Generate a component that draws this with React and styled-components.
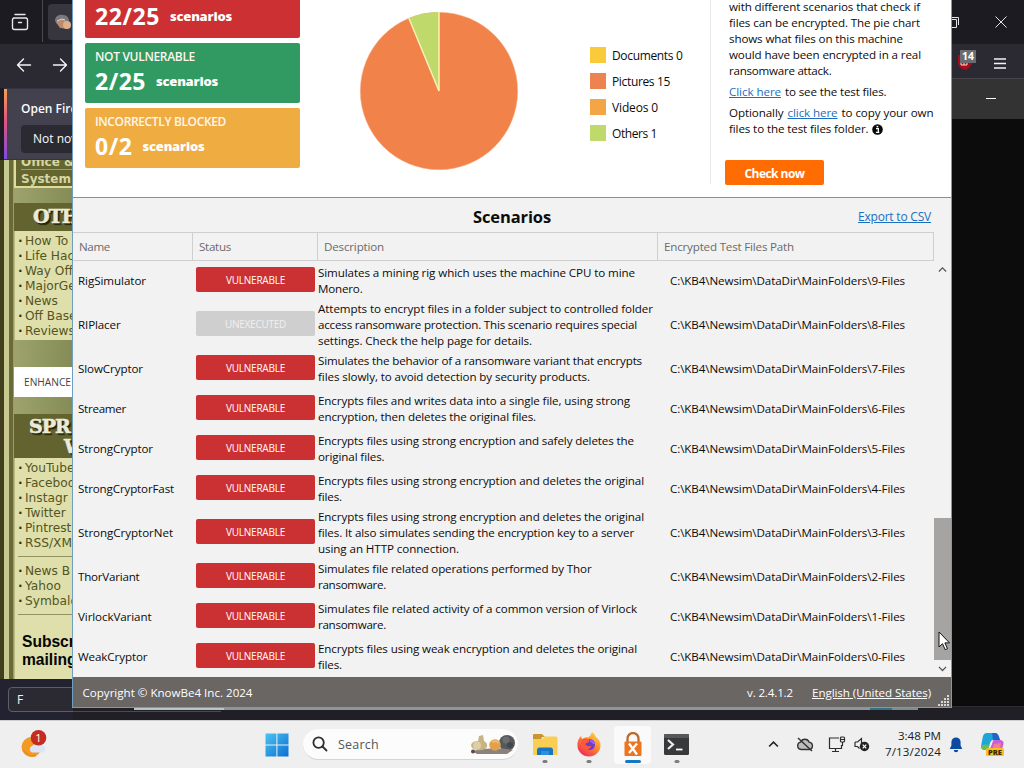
import React, { useLayoutEffect, useRef, useState } from "react";
import styled, { createGlobalStyle, css } from "styled-components";

const GlobalStyle = createGlobalStyle`
  * { box-sizing: border-box; }
  body { margin: 0; font-family: "Open Sans", "Noto Sans", sans-serif; font-size: 11.6px; color: #0c0c0c; }
  svg { display: block; flex: none; }
`;

const verdana = `"DejaVu Sans", Verdana, sans-serif`;

/* Text that tightens its tracking so that it fills a given width. */
const FitSpan = styled.span`
  display: inline-block;
  white-space: pre;
  a > & { text-decoration: underline; text-underline-offset: 1px; }
`;
function Fit({ w, children }) {
  const ref = useRef(null);
  const [spacing, setSpacing] = useState(0);
  useLayoutEffect(() => {
    const natural = ref.current.getBoundingClientRect().width;
    setSpacing((w - natural) / children.length);
  }, []);
  return <FitSpan ref={ref} style={{ letterSpacing: `${spacing}px` }}>{children}</FitSpan>;
}

const Desktop = styled.div`
  width: 1024px; height: 768px; overflow: hidden;
  display: flex; flex-direction: column;
  background: #0c0c0c;
`;
const Workspace = styled.div`
  position: relative; height: 720px; flex: none; overflow: hidden;
  display: flex; justify-content: space-between;
`;

/* ---------- browser behind the dialog ---------- */
const LeftPane = styled.div`width: 73px; overflow: hidden; display: flex; flex-direction: column; background: #1c1b22; position: relative;`;
const RightPane = styled.div`width: 84px; display: flex; flex-direction: column;`;
const TabStrip = styled.div`
  height: 44px; flex: none; background: #1c1b22; display: flex; align-items: center;
  padding-left: 11px; color: #e6e6ea;
`;
const TabDivider = styled.i`width: 1px; height: 42px; flex: none; margin: 0 5px 2px 13px; background: #4a4952;`;
const Tab = styled.div`
  height: 36px; width: 90px; flex: none; background: #37363f; border-radius: 4px 0 0 4px;
  display: flex; align-items: center; padding-left: 6px;
`;
const NavBar = styled.div`
  height: 44px; flex: none; background: #2b2a33; display: flex; align-items: flex-start;
  padding: 13px 0 0 16px; gap: 20px; color: #f4f4f6;
`;
const Notice = styled.div`
  height: 72px; flex: none; background: #42414d; margin-left: 4px; display: flex;
  border: 1px solid #35343f; border-left: 0; 
`;
const NoticeStripe = styled.i`width: 3px; flex: none; background: linear-gradient(#f5a055, #e0557f 45%, #7d4be0);`;
const NoticeBody = styled.div`
  padding: 12px 0 0 14px; color: #fbfbfe; font-size: 12px; line-height: 16px; font-weight: 600; white-space: nowrap;
`;
const NoticeButton = styled.div`
  margin-top: 8px; width: 100px; height: 28px; border-radius: 4px; background: #2b2a33;
  padding: 6px 12px; font-weight: 500;
`;
const Page = styled.div`
  height: 519px; flex: none; display: flex; overflow: hidden;
  background: linear-gradient(90deg, #413e1e 0 4px, #c7ca90 4px 9px, #6a6a38 9px 13px, #9a9e68 13px);
`;
const Sidebar = styled.div`
  margin-left: 14px; width: 120px; flex: none; display: flex; flex-direction: column; font-family: ${verdana};
  background: linear-gradient(90deg, #9da36b, #858b56 60px);
`;
const OpenLinks = styled.div`
  height: 28px; flex: none; background: #64652f; border: 2px solid #dfdb98; border-top: 0; color: #d6d5a4;
  font-weight: 700; font-size: 12px; line-height: 14px; padding-left: 5px; overflow: hidden; white-space: nowrap;
`;
const OpenLink = styled.div`
  height: 16px; line-height: 18px; border-top: 1px solid #a09e5b;
  &:first-child { height: 9px; border: 0; line-height: 4px; }
`;
const SideHead = styled.div`
  margin-top: ${(p) => p.$gap}px; height: ${(p) => p.$h}px; flex: none; background: #62632f;
  font-family: "DejaVu Serif", "Liberation Serif", serif; font-weight: 700; font-size: 19px; line-height: 20px;
  letter-spacing: -1px; -webkit-text-stroke: 0.6px #ecebd8;
  color: #ecebd8; text-shadow: 1px 1px 0 #23230c, 2px 2px 1px #23230c;
  padding: ${(p) => p.$pad}; white-space: nowrap; overflow: hidden;
`;
const Indent = styled.span`padding-left: 35px;`;
const SideList = styled.div`
  flex: none; background: #dedfab; border-left: 1px solid #b8ba80; padding: 2px 0 2px 3px; white-space: nowrap;
  font-size: 12.2px; line-height: 15px; color: #55551f;
  ${(p) => p.$grow && css`flex: 1;`}
`;
const SideItem = styled.div`
  position: relative; top: 0.5px;
  &::before { content: "·"; font-weight: 700; display: inline-block; width: 7px; color: #33330f; }
`;
const SideRule = styled.div`height: 1px; background: #8f9160; margin: 6px 0 6px; width: 100px;`;
const Mailing = styled.div`
  font: 700 15.6px/18px "Liberation Sans", Arial, sans-serif; color: #050505; padding: 12px 0 0 4px;
`;
const AdLabel = styled.div`
  margin-top: 27px; height: 30px; flex: none; background: #fff; color: #444; margin-bottom: 0;
  font: 10.2px/31px "Open Sans", sans-serif; padding-left: 10px;
`;
const FindBar = styled.div`flex: 1; background: #232230; padding: 8px 0 0 8px;`;
const FindInput = styled.div`
  width: 240px; height: 25px; border: 1px solid #5e5d6b; border-radius: 4px; background: #2b2a33;
  color: #f4f4f6; font-size: 12px; line-height: 24px; padding-left: 8px;
`;

const CaptionBar = styled(TabStrip)`padding: 0 17px 0 8px; justify-content: space-between;`;
const ExtBar = styled(NavBar)`height: 34px; padding: 5px 18px 0 18px; justify-content: space-between; gap: 0;`;
const MenuIcon = styled.div`padding-top: 9px;`;
const Blocker = styled.div`position: relative; width: 20px; height: 24px;`;
const BlockerCount = styled.span`
  position: absolute; left: 2px; top: 1px; width: 16px; height: 13px; background: #6b6b70; color: #fff;
  font: 700 10.5px/13px "Open Sans", sans-serif; text-align: center;
`;
const TerminalBar = styled.div`
  height: 41px; flex: none; background: #333; border-top: 1px solid #45454a; display: flex; align-items: center;
  justify-content: flex-end; padding: 0 28px 1px 0;
`;
const Dash = styled.i`width: 10px; height: 1px; background: #fff;`;
const BottomStrip = styled.div`
  position: absolute; left: 0; right: 0; bottom: 0; height: 14px; background: #201f26; border-top: 1px solid #2a2a30;
`;
const Glimpse = styled.i`
  position: absolute; top: ${(p) => p.$y || 708}px; left: ${(p) => p.$x}px; width: ${(p) => p.$w}px;
  height: ${(p) => p.$h || 2}px; background: ${(p) => p.$c};
`;

/* ---------- simulator dialog ---------- */
const Dialog = styled.div`
  position: absolute; left: 72px; top: 0; width: 880px; height: 708px; overflow: hidden;
  background: #f2f2f2; border: solid #6f9fc0; border-width: 0 1px 1px; display: flex; flex-direction: column;
`;
const Summary = styled.div`
  height: 198px; flex: none; background: #fff; border-bottom: 1px solid #8b8d90; display: flex; overflow: hidden;
`;
const Cards = styled.div`width: 215px; margin: -22.5px 0 0 12px; display: flex; flex-direction: column; gap: 5px; flex: none;`;
const Card = styled.div`
  height: 60px; flex: none; border-radius: 2px; background: ${(p) => p.$bg}; color: #fff; padding: 5.5px 10px;
`;
const CardLabel = styled.div`height: 17px; line-height: 17px; font-size: 12px; font-weight: 600; color: #fdf6ee;`;
const CardValue = styled.div`display: flex; align-items: center; gap: 10px; height: 32px;`;
const Count = styled.span`font-size: 23px; font-weight: 700; line-height: 32px;`;
const CountUnit = styled.span`font-size: 13px; font-weight: 800; line-height: 20px; margin-top: -1px;`;
const PieBox = styled.div`margin: 11px 0 0 58.5px; width: 160px; flex: none;`;
const Legend = styled.div`margin: 47px 0 0 71.5px; width: 120px; display: flex; flex-direction: column; gap: 10px; flex: none;`;
const LegendRow = styled.div`display: flex; align-items: center; gap: 6px; height: 16px; font-size: 12px;`;
const Swatch = styled.i`width: 16px; height: 16px; background: ${(p) => p.$c};`;
const Info = styled.div`
  height: 184px; border-left: 1px solid #e9e9e9; flex: 1; padding-left: 18px; line-height: 16px;
  display: flex; flex-direction: column; align-items: flex-start;
`;
const Para = styled.div`
  margin: 0 0 5px; white-space: nowrap; height: ${(p) => p.$lines * 16}px; flex: none;
  &:first-child { height: 79px; margin-top: -1px; margin-bottom: 6px; }
`;
const Line = styled.span`display: flex; gap: ${(p) => p.$gap || 4}px; height: 16px; align-items: center;`;
const Link = styled.a`color: #1a6fc0;`;
const CheckButton = styled.button`
  margin: 18px 0 0 -4px; width: 99px; height: 25px; border: 0; border-radius: 2px; background: #ff6c02; color: #fff;
  font: 700 12px/25px "Open Sans", sans-serif; padding: 1px 0 0;
`;
const TitleRow = styled.div`
  height: 34px; flex: none; display: grid; grid-template-columns: 1fr auto 1fr; align-items: center; padding: 3px 20px 0 20px;
`;
const Title = styled.h2`margin: 0; grid-column: 2; font-size: 16.5px; font-weight: 700; line-height: 24px;`;
const ExportLink = styled(Link)`justify-self: end; font-size: 12px; margin-top: -1px;`;
const columns = css`display: grid; grid-template-columns: 120px 125px 340px 276px;`;
const HeadRow = styled.div`${columns} height: 29px; flex: none; width: 861px; border: 1px solid #cfcfcf; border-left: 0; color: #6b6b6b;`;
const HeadCell = styled.div`border-right: 1px solid #cfcfcf; padding-left: 6px; line-height: 28px; &:last-child { border-right: 0; }`;
const TableArea = styled.div`height: 416px; flex: none; display: flex; justify-content: space-between;`;
const Rows = styled.div`width: 861px; flex: none;`;
const Row = styled.div`${columns} height: ${(p) => p.$h}px; align-items: center;`;
const NameCell = styled.div`padding-left: 5px; line-height: 16px;`;
const DescCell = styled.div`line-height: 16px;`;
const DescLine = styled.div`height: 16px;`;
const PathCell = styled.div`padding-left: 12px; line-height: 16px;`;
const StatusBadge = styled.div`
  margin: -3px 0 0 3px; width: 119px; height: 25px; border-radius: 2px; text-align: center; line-height: 26px; font-size: 10px;
  font-weight: 500; background: ${(p) => (p.$off ? "#cfcfcf" : "#cb3032")}; color: ${(p) => (p.$off ? "#f0f0f0" : "#fff")};
`;
const ScrollBar = styled.div`
  width: 17px; display: flex; flex-direction: column; align-items: center; padding-top: 6px;
`;
const Thumb = styled.i`width: 17px; height: 142px; margin: 246px 0 6px; background: #a5a4a3; flex: none;`;
const Footer = styled.div`
  position: relative; flex: 1; background: #696663; color: #fff; display: flex; align-items: center; padding: 1px 20px 0 9.5px; 
  line-height: 16px;
`;
const Version = styled.span`margin-left: auto; margin-right: 19px;`;
const FooterLink = styled.a`color: #fff;`;
const Grip = styled.div`position: absolute; right: 0; bottom: 0;`;
const Pointer = styled.div`position: absolute; left: 938px; top: 631px;`;

/* ---------- taskbar ---------- */
const TaskBar = styled.div`
  height: 48px; flex: none; background: #efeff0; border-top: 1px solid #cfcfd0; display: flex; align-items: center;
`;
const Slot = styled.div`
  width: ${(p) => p.$w}px; height: 38px; margin-left: ${(p) => p.$ml || 0}px; flex: none; position: relative;
  display: flex; align-items: center; justify-content: center; border-radius: 4px;
  ${(p) => p.$active && css`background: #fafafa;`}
  ${(p) => p.$mark && css`&::after {
    content: ""; position: absolute; bottom: 1px; left: 50%; transform: translateX(-50%); border-radius: 2px;
    width: ${p.$active ? 16 : 5}px; height: 3px; background: ${p.$active ? "#1778c2" : "#7d7d7d"};
  }`}
`;
const SearchPill = styled.div`
  margin-left: 8.5px; width: 215px; height: 31px; border-radius: 16px; background: #fcfcfc; border-bottom: 1px solid #d4d4d4; flex: none;
  display: flex; align-items: center; padding: 0 1px 0 9px; color: #555; font-size: 12.5px; gap: 10px;
`;
const SearchArt = styled.div`margin-left: auto;`;
const Clock = styled.div`width: 65px; margin: 0 1px 2px 5px; text-align: right; line-height: 16px; color: #202020; flex: none;`;

const ArchiveIcon = () => (
  <svg width="18" height="18" viewBox="0 0 18 18" fill="none" stroke="currentColor" strokeWidth="1.4" strokeLinecap="round">
    <path d="M4 1.500h10M2.500 5h13M4.500 5h-1a2 2 0 0 0-2 2v7.500a2 2 0 0 0 2 2h11a2 2 0 0 0 2-2V7a2 2 0 0 0-2-2M7.500 9.500h3" />
  </svg>
);
const FaceIcon = () => (
  <svg width="18" height="18" viewBox="0 0 18 18">
    <path d="M1 8c0-5 4-7 8-6 4 0 6 3 6 6l-4 4-8-1z" fill="#77797b" />
    <path d="M2 9l6-3 7 3-1 7-8-1z" fill="#b98a6d" />
    <circle cx="13" cy="12" r="4" fill="#dfae8c" />
    <path d="M3 8l5-2 3 1" stroke="#d8d8d6" fill="none" />
  </svg>
);
const Arrow = ({ flip }) => (
  <svg width="16" height="16" viewBox="0 0 16 16" fill="none" stroke="currentColor" strokeWidth="1.4" strokeLinecap="round" strokeLinejoin="round">
    <path d={flip ? "M1.500 8h13M8.500 2l6 6-6 6" : "M14.500 8h-13M7.500 2l-6 6 6 6"} />
  </svg>
);
const Chevron = ({ up, size = 9, color = "#555", sw = 1.4 }) => (
  <svg width={size} height={size * 0.6} viewBox="0 0 10 6" fill="none" stroke={color} strokeWidth={sw}>
    <path d={up ? "M1 5l4-4 4 4" : "M1 1l4 4 4-4"} />
  </svg>
);
const Pie = () => (
  <svg width="160" height="160" viewBox="-80 -80 160 160">
    <circle r="78.7" fill="#f0824a" stroke="#f6b08a" strokeWidth="0.500" />
    <path d="M0 0L-30.200-73A79 79 0 0 1 0-79z" fill="#bfd96a" />
    <path d="M-30.200-73L0 0V-79" fill="none" stroke="#fbf1b4" strokeWidth="1.500" strokeLinejoin="bevel" />
  </svg>
);
const InfoDot = () => (
  <svg width="11" height="11" viewBox="0 0 11 11">
    <circle cx="5.500" cy="5.500" r="5.300" fill="#080808" />
    <path d="M4 4.600h2.300v3.400M3.900 8.400h3.400" stroke="#fff" strokeWidth="1.300" fill="none" />
    <rect x="4.600" y="1.800" width="1.700" height="1.600" fill="#fff" />
  </svg>
);
const GripDots = () => (
  <svg width="14" height="13" viewBox="0 0 14 13" fill="#d8d8d8">
    {[[9, 1], [6, 4], [9, 4], [3, 7], [6, 7], [9, 7], [0, 10], [3, 10], [6, 10], [9, 10]].map(([x, y]) => (
      <rect key={`${x}-${y}`} x={x + 1} y={y} width="2" height="2" />
    ))}
  </svg>
);
const Weather = () => (
  <svg width="26" height="30" viewBox="0 0 26 30">
    <circle cx="10.500" cy="17" r="10" fill="#f39a25" />
    <path d="M3 20a9 9 0 0 0 12 5" stroke="#e99022" strokeWidth="2" fill="none" />
    <path d="M11 22.500a3.500 3.500 0 0 1 0-6.500 5 5 0 0 1 7-1 4 4 0 0 1 4 7.500z" fill="#dbe5f5" />
    <circle cx="17.500" cy="7.800" r="7.800" fill="#c52b20" />
    <text x="17.500" y="12" textAnchor="middle" fontSize="11" fill="#fff" fontFamily="Open Sans">1</text>
  </svg>
);
const WindowsLogo = () => (
  <svg width="24" height="24" viewBox="0 0 24 24">
    <defs><linearGradient id="win" x1="0" y1="0" x2="1" y2="1"><stop stopColor="#4cc3f3" /><stop offset="1" stopColor="#0a6fd0" /></linearGradient></defs>
    <path d="M.5.5H11.400V11.400H.5zM12.400.5H23.500V11.400H12.400zM.5 12.400H11.400V23.500H.5zM12.400 12.400H23.500V23.500H12.400z" fill="url(#win)" />
  </svg>
);
const Magnifier = () => (
  <svg width="16" height="16" viewBox="0 0 16 16" fill="none" stroke="#2d2d2d" strokeWidth="1.800" strokeLinecap="round">
    <circle cx="6.600" cy="6.600" r="5.200" /><path d="M10.500 10.500l4 4" />
  </svg>
);
const Gourds = () => (
  <svg width="48" height="24" viewBox="0 0 48 24">
    <circle cx="38" cy="11" r="8" fill="#55585c" /><circle cx="37" cy="8" r="3.500" fill="#6c6f72" /><circle cx="41" cy="13" r="3" fill="#44474a" />
    <path d="M3 19q20-5 41-1l-6 4H8z" fill="#8d8279" />
    <path d="M10 4l4-1 1 6q4 2 3 6-3 4-10 3-6-1-6-5 1-4 7-4z" fill="#c6b583" />
    <circle cx="8" cy="13.500" r="4" fill="#dccfa6" />
    <circle cx="26" cy="13" r="5.800" fill="#e0a04c" /><path d="M23 10q4-2 7 1" stroke="#f0bd70" strokeWidth="2" fill="none" />
    <circle cx="4" cy="19.500" r="2" fill="#5b4a43" />
  </svg>
);
const Folder = () => (
  <svg width="26" height="24" viewBox="0 0 26 24">
    <path d="M1 2q0-1 1-1h8l3 3h-3l-1 3H1z" fill="#c8962c" />
    <path d="M1 6h9l3-2.500h11q1.500 0 1.500 1.500v17H1z" fill="#f9ce52" />
    <path d="M5 22v-5q0-2.500 2.500-2.500h11q2.500 0 2.500 2.500v5z" fill="#1976c5" />
    <path d="M9 22v-4h8v4" fill="#2b91de" />
  </svg>
);
const FirefoxLogo = () => (
  <svg width="24" height="25" viewBox="0 0 24 25">
    <defs><linearGradient id="fox" x1=".9" y1="0" x2=".2" y2="1"><stop stopColor="#ffe14a" /><stop offset=".45" stopColor="#ff8a2b" /><stop offset="1" stopColor="#ef2360" /></linearGradient></defs>
    <path d="M15 0q3 2 4 5 4.500 3 4.500 8.500a11.500 11 0 0 1-23 0Q0 8 4 4l1 3q3-2 7-2 2-2 3-5z" fill="url(#fox)" />
    <circle cx="12.500" cy="12.500" r="5.500" fill="#6c3bd1" />
    <path d="M4.500 7.500q4-2 8 0l-1 3q-3 0-3 2 2 3 6 1-2 5-6 4-6-3-4-10z" fill="#fb5a37" />
    <path d="M13 9q3 0 4 3" stroke="#a45cf0" strokeWidth="2" fill="none" />
  </svg>
);
const LockLogo = () => (
  <svg width="18" height="25" viewBox="0 0 18 25">
    <path d="M3.500 11V6.500a5.500 5.500 0 0 1 11 0V11" fill="none" stroke="#bd6a2c" strokeWidth="2.300" />
    <rect x=".5" y="9.500" width="17" height="14.500" rx="1" fill="#ee7420" />
    <path d="M5 11.500l8 11M13 11.500L5 21" stroke="#fff" strokeWidth="2.300" />
  </svg>
);
const TerminalLogo = () => (
  <svg width="25" height="21" viewBox="0 0 25 21">
    <rect width="25" height="21" rx="1.500" fill="#38393b" /><rect width="25" height="4" rx="1" fill="#55575a" />
    <path d="M4 6l5 4.500-5 4.500" stroke="#ececec" strokeWidth="2.200" fill="none" /><path d="M12 15.500h6.500" stroke="#fff" strokeWidth="1.800" />
  </svg>
);
const CloudOff = () => (
  <svg width="18" height="15" viewBox="0 0 18 15" fill="none" stroke="#333" strokeWidth="1.300">
    <path d="M5 12.500a3.700 3.700 0 0 1-.4-7.300 4.600 4.600 0 0 1 8.600 0 3.700 3.700 0 0 1 .3 7.300z" fill="#bdbdbd" /><path d="M2 1l14 13" strokeWidth="1.500" />
  </svg>
);
const Monitor = () => (
  <svg width="18" height="17" viewBox="0 0 18 17" fill="none" stroke="#2d2d2d" strokeWidth="1.200">
    <path d="M11 2H1.500v10.500h12V9M7.500 12.500v3M4 15.500h7" /><rect x="12.500" y="1" width="4" height="5" rx="1" /><path d="M12.500 3.500h4M14.500 6v4" />
  </svg>
);
const SpeakerMuted = () => (
  <svg width="16" height="15" viewBox="0 0 16 15">
    <path d="M1 5h2.500L7.500 1.500V9M1 5v4.500h2.500l2 2" fill="none" stroke="#2d2d2d" strokeWidth="1.200" />
    <circle cx="10.500" cy="9.500" r="4.700" fill="#222" /><path d="M8.700 7.700l3.600 3.600M12.300 7.700l-3.600 3.600" stroke="#fff" strokeWidth="1.200" />
  </svg>
);
const Bell = () => (
  <svg width="14" height="16" viewBox="0 0 14 16" fill="#0b4a9e">
    <path d="M7 .5a4.600 4.600 0 0 0-4.600 4.600v3.400L.7 12h12.600l-1.700-3.500V5.100A4.600 4.600 0 0 0 7 .5zM4.800 13h4.400a2.200 2.200 0 0 1-4.400 0z" />
  </svg>
);
const Copilot = () => (
  <svg width="26" height="26" viewBox="0 0 26 26">
    <path d="M7 1h8q3 0 4 4l1 3h-7q-2 0-3 3l-2 7H5q-4 0-4-4L3 4q1-3 4-3z" fill="#20a5d8" />
    <path d="M1 14q0 4 4 4h3l1.500-5q-4-1-8 0z" fill="#67bd5a" />
    <path d="M12 1h4q2 1 3 4l1 3h-7z" fill="#2563c8" />
    <path d="M14 8h7q3 1 2.500 4l-2 7H9l3-7q1-4 2-4z" fill="#ca5fd3" />
    <path d="M14 12l7-1-1 7h-8z" fill="#ef7f9b" />
    <rect x="6" y="16" width="18" height="8" rx="1.500" fill="#f7bd27" />
    <text x="15" y="23" textAnchor="middle" fontSize="7.500" fontWeight="800" fill="#3a2a00" fontFamily="Open Sans">PRE</text>
  </svg>
);

const cards = [
  { bg: "#cd3033", label: "", lw: 0, value: "22/25", vw: 65 },
  { bg: "#319a62", label: "NOT VULNERABLE", lw: 100, value: "2/25", vw: 51 },
  { bg: "#efac41", label: "INCORRECTLY BLOCKED", lw: 131, value: "0/2", vw: 37.5 },
];
const legend = [
  ["Documents 0", "#f9cb3a", 70.5],
  ["Pictures 15", "#ef8350", 58],
  ["Videos 0", "#f4a646", 46],
  ["Others 1", "#bfd96a", 45],
];
const scenarios = [
  ["RigSimulator", 68, [["Simulates a mining rig which uses the machine CPU to mine", 317], ["Monero.", 44.5]], 9],
  ["RIPlacer", 42.5, [["Attempts to encrypt files in a folder subject to controlled folder", 335], ["access ransomware protection. This scenario requires special", 319], ["settings. Check the help page for details.", 214]], 8],
  ["SlowCryptor", 65, [["Simulates the behavior of a ransomware variant that encrypts", 324], ["files slowly, to avoid detection by security products.", 272]], 7],
  ["Streamer", 48, [["Encrypts files and writes data into a single file, using strong", 312], ["encryption, then deletes the original files.", 218]], 6],
  ["StrongCryptor", 75, [["Encrypts files using strong encryption and safely deletes the", 316], ["original files.", 66.5]], 5],
  ["StrongCryptorFast", 96, [["Encrypts files using strong encryption and deletes the original", 326], ["files.", 24]], 4],
  ["StrongCryptorNet", 95, [["Encrypts files using strong encryption and deletes the original", 326], ["files. It also simulates sending the encryption key to a server", 316], ["using an HTTP connection.", 141]], 3],
  ["ThorVariant", 61.5, [["Simulates file related operations performed by Thor", 273.5], ["ransomware.", 68]], 2],
  ["VirlockVariant", 73.5, [["Simulates file related activity of a common version of Virlock", 319], ["ransomware.", 68]], 1],
  ["WeakCryptor", 69.5, [["Encrypts files using weak encryption and deletes the original", 319], ["files.", 24]], 0],
];

function BrowserLeft() {
  return (
    <LeftPane>
      <TabStrip><ArchiveIcon /><TabDivider /><Tab><FaceIcon /></Tab></TabStrip>
      <NavBar><Arrow /><Arrow flip /></NavBar>
      <Notice>
        <NoticeStripe />
        <NoticeBody>Open Fire<NoticeButton>Not nov</NoticeButton></NoticeBody>
      </Notice>
      <Page>
        <Sidebar>
          <OpenLinks><OpenLink>Office &amp;</OpenLink><OpenLink>System</OpenLink></OpenLinks>
          <SideHead $gap={15} $h={28} $pad="3px 0 0 19px">OTH</SideHead>
          <SideList>
            {["How To", "Life Hac", "Way Off", "MajorGe", "News", "Off Base", "Reviews"].map((t) => <SideItem key={t}>{t}</SideItem>)}
          </SideList>
          <AdLabel>ENHANCE</AdLabel>
          <SideHead $gap={17} $h={44} $pad="2px 0 0 15px">SPR<br /><Indent>W</Indent></SideHead>
          <SideList $grow>
            {["YouTube", "Faceboo", "Instagr", "Twitter", "Pintrest", "RSS/XM"].map((t) => <SideItem key={t}>{t}</SideItem>)}
            <SideRule />
            {["News B", "Yahoo", "Symbalo"].map((t) => <SideItem key={t}>{t}</SideItem>)}
            <SideRule />
            <Mailing>Subscr<br />mailing</Mailing>
          </SideList>
        </Sidebar>
      </Page>
      <FindBar><FindInput>F</FindInput></FindBar>
    </LeftPane>
  );
}

function BrowserRight() {
  return (
    <RightPane>
      <CaptionBar>
        <svg width="12" height="12" viewBox="0 0 12 12" fill="none" stroke="currentColor"><path d="M.5 3.500h8v8h-8zM3 1.500h7.500V9" /></svg>
        <svg width="12" height="12" viewBox="0 0 12 12" fill="none" stroke="currentColor"><path d="M.5.5l11 11M11.500.5l-11 11" /></svg>
      </CaptionBar>
      <ExtBar>
        <Blocker>
          <svg width="16" height="22" viewBox="0 0 16 22"><path d="M0 6h14v9q-3 5-7 6-5-1-7-6z" fill="#a80c18" /><path d="M3 13v3h3v-3M6 16h3v-3" stroke="#f2d8d8" fill="none" /></svg>
          <BlockerCount>14</BlockerCount>
        </Blocker>
        <MenuIcon>
          <svg width="12" height="11" viewBox="0 0 12 11" stroke="#f4f4f6" strokeWidth="1.400"><path d="M0 1h12M0 5.500h12M0 10h12" /></svg>
        </MenuIcon>
      </ExtBar>
      <TerminalBar><Dash /></TerminalBar>
    </RightPane>
  );
}

function SimulatorDialog() {
  return (
    <Dialog>
      <Summary>
        <Cards>
          {cards.map((c) => (
            <Card key={c.value} $bg={c.bg}>
              <CardLabel>{c.label && <Fit w={c.lw}>{c.label}</Fit>}</CardLabel>
              <CardValue><Count><Fit w={c.vw}>{c.value}</Fit></Count><CountUnit><Fit w={62}>scenarios</Fit></CountUnit></CardValue>
            </Card>
          ))}
        </Cards>
        <PieBox><Pie /></PieBox>
        <Legend>
          {legend.map(([t, c, w]) => <LegendRow key={t}><Swatch $c={c} /><Fit w={w}>{t}</Fit></LegendRow>)}
        </Legend>
        <Info>
          <Para $lines={5}>
            <Line><Fit w={191}>with different scenarios that check if</Fit></Line>
            <Line><Fit w={191}>files can be encrypted. The pie chart</Fit></Line>
            <Line><Fit w={174}>shows what files on this machine</Fit></Line>
            <Line><Fit w={192}>would have been encrypted in a real</Fit></Line>
            <Line><Fit w={102.5}>ransomware attack.</Fit></Line>
          </Para>
          <Para $lines={1}>
            <Line><Link><Fit w={52}>Click here</Fit></Link><Fit w={101.5}>to see the test files.</Fit></Line>
          </Para>
          <Para $lines={2}>
            <Line><Fit w={54.5}>Optionally</Fit><Link><Fit w={50}>click here</Fit></Link><Fit w={92}>to copy your own</Fit></Line>
            <Line $gap={3}><Fit w={139.5}>files to the test files folder.</Fit><InfoDot /></Line>
          </Para>
          <CheckButton><Fit w={60}>Check now</Fit></CheckButton>
        </Info>
      </Summary>
      <TitleRow><Title><Fit w={78}>Scenarios</Fit></Title><ExportLink><Fit w={73}>Export to CSV</Fit></ExportLink></TitleRow>
      <HeadRow>
        <HeadCell><Fit w={31}>Name</Fit></HeadCell>
        <HeadCell><Fit w={32}>Status</Fit></HeadCell>
        <HeadCell><Fit w={60}>Description</Fit></HeadCell>
        <HeadCell><Fit w={130}>Encrypted Test Files Path</Fit></HeadCell>
      </HeadRow>
      <TableArea>
        <Rows>
          {scenarios.map(([name, nw, lines, n]) => {
            const off = name === "RIPlacer";
            return (
              <Row key={name} $h={lines.length === 3 ? 48 : 40}>
                <NameCell><Fit w={nw}>{name}</Fit></NameCell>
                <StatusBadge $off={off}><Fit w={off ? 61 : 59}>{off ? "UNEXECUTED" : "VULNERABLE"}</Fit></StatusBadge>
                <DescCell>{lines.map(([t, w]) => <DescLine key={t}><Fit w={w}>{t}</Fit></DescLine>)}</DescCell>
                <PathCell><Fit w={235}>{`C:\\KB4\\Newsim\\DataDir\\MainFolders\\${n}-Files`}</Fit></PathCell>
              </Row>
            );
          })}
        </Rows>
        <ScrollBar><Chevron up /><Thumb /><Chevron /></ScrollBar>
      </TableArea>
      <Footer>
        <Fit w={170}>Copyright © KnowBe4 Inc. 2024</Fit>
        <Version><Fit w={46}>v. 2.4.1.2</Fit></Version>
        <FooterLink><Fit w={119}>English (United States)</Fit></FooterLink>
        <Grip><GripDots /></Grip>
      </Footer>
    </Dialog>
  );
}

function WindowsTaskBar() {
  return (
    <TaskBar>
      <Slot $w={68}><Weather /></Slot>
      <Slot $w={36} $ml={190.5}><WindowsLogo /></Slot>
      <SearchPill><Magnifier /><Fit w={41}>Search</Fit><SearchArt><Gourds /></SearchArt></SearchPill>
      <Slot $w={37} $ml={8} $mark><Folder /></Slot>
      <Slot $w={37} $ml={7} $mark><FirefoxLogo /></Slot>
      <Slot $w={37} $ml={7} $mark $active><LockLogo /></Slot>
      <Slot $w={37} $ml={7} $mark><TerminalLogo /></Slot>
      <Slot $w={30} $ml={63}><Chevron up size={11} color="#222" /></Slot>
      <Slot $w={30} $ml={2}><CloudOff /></Slot>
      <Slot $w={30} $ml={2}><Monitor /></Slot>
      <Slot $w={18} $ml={1}><SpeakerMuted /></Slot>
      <Clock><div><Fit w={43}>3:48 PM</Fit></div><div><Fit w={56}>7/13/2024</Fit></div></Clock>
      <Slot $w={26} $ml={1}><Bell /></Slot>
      <Slot $w={34} $ml={7}><Copilot /></Slot>
    </TaskBar>
  );
}

export default function App() {
  return (
    <>
      <GlobalStyle />
      <Desktop>
        <Workspace>
          <BottomStrip />
          <BrowserLeft />
          <BrowserRight />
          <Glimpse $x={134} $w={90} $c="#b9c3cc" />
          <Glimpse $x={224} $w={646} $c="#8f959b" />
          <Glimpse $x={870} $w={22} $c="#356f88" />
          <Glimpse $x={892} $w={26} $c="#7e8b92" />
          <Glimpse $x={73} $w={148} $y={711} $h={1} $c="#4a4955" />
          <SimulatorDialog />
          <Pointer>
            <svg width="14" height="21" viewBox="0 0 14 21"><path d="M1 1v15l3.500-3.300 2.700 6 2.300-1-2.600-5.800h4.600z" fill="#fff" stroke="#111" strokeWidth="1" /></svg>
          </Pointer>
        </Workspace>
        <WindowsTaskBar />
      </Desktop>
    </>
  );
}
